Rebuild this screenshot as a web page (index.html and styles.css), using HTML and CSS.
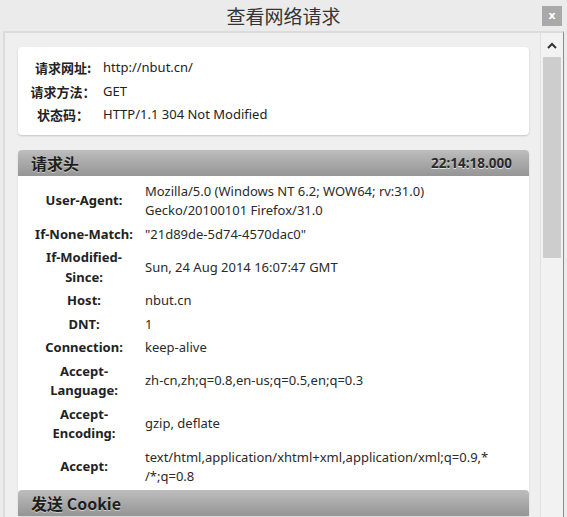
FILE: index.html
```html
<!DOCTYPE html>
<html lang="zh-CN">
<head>
<meta charset="utf-8">
<title>查看网络请求</title>
<link rel="stylesheet" href="styles.css">
</head>
<body>
<div class="window">
  <header class="titlebar">
    <span></span>
    <h1 class="title">查看网络请求</h1>
    <button class="close">x</button>
  </header>
  <div class="panel">
    <div class="content">
      <section class="card summary">
        <div class="srow"><span class="slabel">请求网址:</span><span class="sval">http://nbut.cn/</span></div>
        <div class="srow"><span class="slabel">请求方法：</span><span class="sval">GET</span></div>
        <div class="srow"><span class="slabel">状态码：</span><span class="sval">HTTP/1.1 304 Not Modified</span></div>
      </section>

      <section class="block">
        <div class="bhead"><span class="btitle">请求头</span><span class="btime">22:14:18.000</span></div>
        <div class="table">
          <div class="row"><div class="key">User-Agent:</div><div class="val">Mozilla/5.0 (Windows NT 6.2; WOW64; rv:31.0)<br>Gecko/20100101 Firefox/31.0</div></div>
          <div class="row"><div class="key">If-None-Match:</div><div class="val">"21d89de-5d74-4570dac0"</div></div>
          <div class="row"><div class="key">If-Modified-<br>Since:</div><div class="val">Sun, 24 Aug 2014 16:07:47 GMT</div></div>
          <div class="row"><div class="key">Host:</div><div class="val">nbut.cn</div></div>
          <div class="row"><div class="key">DNT:</div><div class="val">1</div></div>
          <div class="row"><div class="key">Connection:</div><div class="val">keep-alive</div></div>
          <div class="row"><div class="key">Accept-<br>Language:</div><div class="val">zh-cn,zh;q=0.8,en-us;q=0.5,en;q=0.3</div></div>
          <div class="row"><div class="key">Accept-<br>Encoding:</div><div class="val">gzip, deflate</div></div>
          <div class="row"><div class="key">Accept:</div><div class="val">text/html,application/xhtml+xml,application/xml;q=0.9,*<br>/*;q=0.8</div></div>
        </div>
        <div class="bhead"><span class="btitle">发送 Cookie</span></div>
      </section>
    </div>
    <div class="scrollbar">
      <div class="arrow"><svg width="10" height="7" viewBox="0 0 10 7"><path d="M1 6 L5 2 L9 6" fill="none" stroke="#333" stroke-width="2"/></svg></div>
      <div class="thumb"></div>
    </div>
  </div>
</div>
</body>
</html>
```

FILE: styles.css
```css
html, body {
  margin: 0;
  padding: 0;
}
body {
  width: 567px;
  height: 517px;
  overflow: hidden;
  background: #ebebeb;
  font-family: "Noto Sans", "Noto Sans CJK SC", sans-serif;
  font-size: 13px;
  color: #2a2a2a;
}
.window {
  display: flex;
  flex-direction: column;
  height: 517px;
}
.titlebar {
  height: 31px;
  display: grid;
  grid-template-columns: 1fr auto 1fr;
  align-items: center;
}
.title {
  margin: 0;
  font-family: "Noto Sans CJK SC", sans-serif;
  font-weight: 400;
  font-size: 19px;
  color: #333;
  line-height: 28px;
}
.close {
  justify-self: end;
  margin-right: 5px;
  width: 20px;
  height: 20px;
  border: none;
  padding: 0;
  background: #a9a9a9;
  color: #fff;
  font-family: "DejaVu Sans", sans-serif;
  font-weight: bold;
  font-size: 11px;
  line-height: 18px;
}
.panel {
  flex: 1;
  margin: 0 3px 0 3px;
  display: flex;
  background: #efefef;
  border-top: 2px solid #dcdcdc;
  border-left: 2px solid #dcdcdc;
  border-right: 1px solid #8a8a8a;
  overflow: hidden;
}
.content {
  flex: 1;
  padding: 14px 11px 0 13px;
  display: flex;
  flex-direction: column;
  gap: 15px;
}
.scrollbar {
  width: 22px;
  border-left: 1px solid #e0e0e0;
  background: #f2f2f2;
  display: flex;
  flex-direction: column;
  align-items: center;
}
.arrow {
  height: 24px;
  display: flex;
  align-items: center;
  justify-content: center;
}
.thumb {
  width: 18px;
  height: 201px;
  background: #cdcdcd;
}
.card {
  background: #fff;
  border-radius: 4px;
  box-shadow: 0 1px 2px rgba(0,0,0,0.18);
}
.summary {
  padding: 9px 0 8px 6px;
}
.srow {
  display: grid;
  grid-template-columns: 78px 1fr;
  column-gap: 1px;
  line-height: 23.5px;
}
.slabel {
  text-align: center;
  font-family: "Noto Sans CJK SC", sans-serif;
  font-weight: 700;
  font-size: 13px;
  color: #222;
}
.sval {
  color: #222;
}
.block {
  background: #fff;
  border-radius: 4px;
  box-shadow: 0 1px 2px rgba(0,0,0,0.12);
}
.bhead {
  height: 26px;
  border-radius: 4px 4px 0 0;
  background: linear-gradient(#bdbdbd, #959595);
  display: flex;
  align-items: center;
  justify-content: space-between;
  padding: 0 17px 0 13px;
}
.btitle {
  font-family: "Noto Sans CJK SC", sans-serif;
  font-weight: 700;
  font-size: 16px;
  color: #1e1e1e;
  text-shadow: 0 1px 0 rgba(255,255,255,0.5);
}
.btime {
  font-weight: 700;
  font-size: 13.5px;
  color: #2a2a2a;
  text-shadow: 0 1px 0 rgba(255,255,255,0.7);
}
.table {
  padding: 4px 0 1px 6px;
}
.row {
  display: grid;
  grid-template-columns: 120px 1fr;
  column-gap: 1px;
  align-items: center;
  padding: 2px 0;
  line-height: 19.5px;
}
.key {
  text-align: center;
  font-weight: 700;
  color: #222;
}
.val {
  color: #2a2a2a;
}
```
